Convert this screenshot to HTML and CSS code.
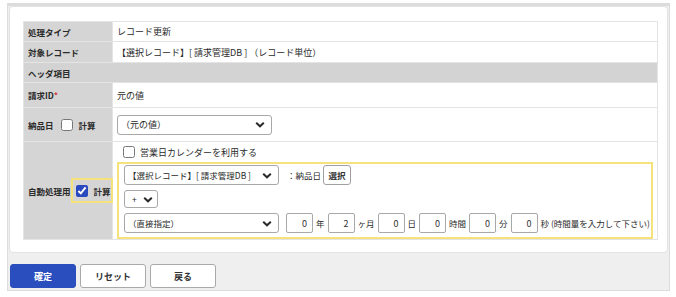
FILE: index.html
```html
<!DOCTYPE html>
<html lang="ja">
<head>
    <meta charset="UTF-8">
    <title>レコード更新</title>
    <link rel="stylesheet" href="styles.css">
</head>
<body>
    <div class="frame">
        <div class="card">
            <table class="form">
                <tr class="r1">
                    <th>処理タイプ</th>
                    <td class="text">レコード更新</td>
                </tr>
                <tr class="r2">
                    <th>対象レコード</th>
                    <td class="text">【選択レコード】[ 請求管理DB ] （レコード単位）</td>
                </tr>
                <tr class="r3">
                    <th colspan="2" class="section">ヘッダ項目</th>
                </tr>
                <tr class="r4">
                    <th>請求ID<span class="req">*</span></th>
                    <td class="text">元の値</td>
                </tr>
                <tr class="r5">
                    <th>
                        <div class="label-line">
                            <span>納品日</span>
                            <input type="checkbox" class="cb">
                            <span>計算</span>
                        </div>
                    </th>
                    <td class="pad">
                        <div class="select wide"><span>（元の値）</span><svg class="chev" viewBox="0 0 10 6"><path d="M1.2 1.2 L5 4.8 L8.8 1.2" /></svg></div>
                    </td>
                </tr>
                <tr class="r6">
                    <th>
                        <div class="label-line">
                            <span>自動処理用</span>
                            <div class="calc-box">
                                <input type="checkbox" class="cb" checked>
                                <span>計算</span>
                            </div>
                        </div>
                    </th>
                    <td class="auto">
                        <label class="calendar"><input type="checkbox" class="cb"> 営業日カレンダーを利用する</label>
                        <div class="calc-area">
                            <div class="line">
                                <div class="select wide"><span>【選択レコード】[ 請求管理DB ]</span><svg class="chev" viewBox="0 0 10 6"><path d="M1.2 1.2 L5 4.8 L8.8 1.2" /></svg></div>
                                <span class="field-name">：納品日</span>
                                <button class="pick">選択</button>
                            </div>
                            <div class="line">
                                <div class="select op"><span>+</span><svg class="chev" viewBox="0 0 10 6"><path d="M1.2 1.2 L5 4.8 L8.8 1.2" /></svg></div>
                            </div>
                            <div class="line">
                                <div class="select wide"><span>（直接指定）</span><svg class="chev" viewBox="0 0 10 6"><path d="M1.2 1.2 L5 4.8 L8.8 1.2" /></svg></div>
                                <input class="num first" type="text" value="0"><span class="unit">年</span>
                                <input class="num" type="text" value="2"><span class="unit">ヶ月</span>
                                <input class="num" type="text" value="0"><span class="unit">日</span>
                                <input class="num" type="text" value="0"><span class="unit">時間</span>
                                <input class="num" type="text" value="0"><span class="unit">分</span>
                                <input class="num" type="text" value="0"><span class="unit">秒 (時間量を入力して下さい)</span>
                            </div>
                        </div>
                    </td>
                </tr>
            </table>
        </div>
        <div class="footer">
            <button class="btn primary">確定</button>
            <button class="btn">リセット</button>
            <button class="btn">戻る</button>
        </div>
    </div>
</body>
</html>
```

FILE: styles.css
```css
body {
    margin: 0;
    font-family: "Noto Sans CJK JP", "Noto Sans", sans-serif;
    font-size: 9px;
    color: #2A2A2A;
    background-color: #FFFFFF;
}

.frame {
    margin: 3px 6px 0 7px;
    background-color: #EFEFEF;
    border: 1px solid #DCDCDC;
    border-top-width: 3px;
    padding: 0 1px 1px 1px;
}

.card {
    background-color: #FFFFFF;
    border: 1px solid #E2E2E2;
    border-radius: 4px;
    padding: 14px 9px 12px 13px;
}

table.form {
    width: 100%;
    border-collapse: collapse;
    table-layout: fixed;
}

table.form th,
table.form td {
    border: 1px solid #E4E4E4;
    padding: 0 4px;
    vertical-align: middle;
    text-align: left;
}

table.form th {
    width: 80px;
    background-color: #D5D5D5;
    font-size: 8.5px;
    font-weight: bold;
    white-space: nowrap;
}

table.form th.section {
    background-color: #D3D3D3;
}

table.form tr.r1 th, table.form tr.r1 td { height: 19px; }
table.form tr.r2 th, table.form tr.r2 td { height: 20px; }
table.form tr.r3 th { height: 19px; }
table.form tr.r4 th, table.form tr.r4 td { height: 24px; }
table.form tr.r5 th, table.form tr.r5 td { height: 33px; }
table.form tr.r6 th, table.form tr.r6 td { height: 96px; }

.req {
    color: #D23B3B;
}

.label-line {
    display: flex;
    align-items: center;
}

.cb {
    width: 12px;
    height: 12px;
    margin: 0;
    flex-shrink: 0;
    accent-color: #2B49BE;
}

.r5 .label-line .cb {
    margin: 0 6px 0 7px;
}

.calc-box {
    display: flex;
    align-items: center;
    margin-left: auto;
    margin-right: -5px;
    height: 21px;
    width: 39px;
    border: 2px solid #F5E27A;
    padding-left: 3px;
}

.calc-box .cb {
    margin-right: 6px;
}

td.pad {
    padding-left: 6px;
}

.select {
    display: flex;
    align-items: center;
    justify-content: space-between;
    flex-shrink: 0;
    box-sizing: border-box;
    height: 20px;
    border: 1px solid #A8A8A8;
    border-radius: 3px;
    background-color: #FFFFFF;
    padding: 0 6px 0 3px;
    white-space: nowrap;
}

.select.wide {
    width: 155px;
}

.select.op {
    width: 34px;
    height: 18px;
    padding: 0 4px 0 7px;
}

.chev {
    width: 10px;
    height: 7px;
    fill: none;
    stroke: #2A2A2A;
    stroke-width: 2;
}

td.auto {
    padding: 0;
}

.calendar {
    display: flex;
    align-items: center;
    gap: 5px;
    height: 20px;
    padding-left: 6px;
}

.calc-area {
    border: 2px solid #F5E27A;
    padding: 1px 5px 4px 5px;
    display: flex;
    flex-direction: column;
    gap: 5px;
    font-size: 8.5px;
}

.calc-area .line {
    display: flex;
    align-items: center;
    white-space: nowrap;
}

.field-name {
    margin-left: 8px;
    margin-right: 2px;
}

button.pick {
    flex-shrink: 0;
    height: 20px;
    width: 28px;
    padding: 0;
    font-family: inherit;
    font-size: 8.5px;
    font-weight: bold;
    color: #333333;
    background-color: #FFFFFF;
    border: 1px solid #A0A0A0;
    border-radius: 3px;
}

input.num {
    flex-shrink: 0;
    box-sizing: border-box;
    width: 27px;
    height: 20px;
    margin: 0;
    padding: 0 5px;
    border: 1px solid #A8A8A8;
    border-radius: 2px;
    text-align: right;
    font-family: inherit;
    font-size: 9px;
    color: #333333;
}

input.num.first {
    margin-left: 7px;
}

.unit {
    flex-shrink: 0;
    margin: 0 3px;
}

.footer {
    padding: 11px 0 1px 1px;
    display: flex;
    gap: 4px;
}

.btn {
    width: 66px;
    height: 24px;
    padding: 0;
    font-family: inherit;
    font-size: 9px;
    font-weight: bold;
    color: #333333;
    background-color: #FFFFFF;
    border: 1px solid #A9A9A9;
    border-radius: 3px;
}

.btn.primary {
    background-color: #2B4EBF;
    border-color: #2B4EBF;
    color: #FFFFFF;
}
```
